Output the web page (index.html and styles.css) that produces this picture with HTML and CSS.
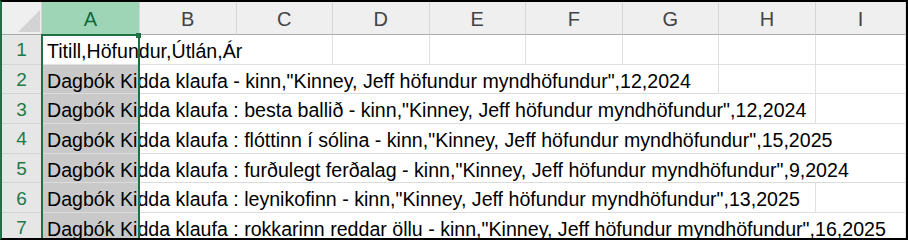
FILE: index.html
```html
<!DOCTYPE html>
<html lang="is">
<head>
<meta charset="utf-8">
<title>Sheet</title>
<link rel="stylesheet" href="styles.css">
</head>
<body>
<div class="sheet">
  <div class="grid">
    <div class="corner"><svg class="tri" width="22" height="22" viewBox="0 0 22 22"><polygon points="22,0 22,22 0,22" fill="#d3d3d3"/></svg></div>
    <div class="ch ch-sel">A</div>
    <div class="ch">B</div>
    <div class="ch">C</div>
    <div class="ch">D</div>
    <div class="ch">E</div>
    <div class="ch">F</div>
    <div class="ch">G</div>
    <div class="ch">H</div>
    <div class="ch">I</div>

    <div class="rh">1</div>
    <div class="txt active s3">Titill,Höfundur,Útlán,Ár</div>
    <div class="cell"></div><div class="cell"></div><div class="cell"></div><div class="cell"></div><div class="cell"></div><div class="cell"></div>

    <div class="rh">2</div>
    <div class="txt sel s7">Dagbók Kidda klaufa - kinn,"Kinney, Jeff höfundur myndhöfundur",12,2024</div>
    <div class="cell"></div><div class="cell"></div>

    <div class="rh">3</div>
    <div class="txt sel s8">Dagbók Kidda klaufa : besta ballið - kinn,"Kinney, Jeff höfundur myndhöfundur",12,2024</div>
    <div class="cell"></div>

    <div class="rh">4</div>
    <div class="txt sel s9">Dagbók Kidda klaufa : flóttinn í sólina - kinn,"Kinney, Jeff höfundur myndhöfundur",15,2025</div>

    <div class="rh">5</div>
    <div class="txt sel s9">Dagbók Kidda klaufa : furðulegt ferðalag - kinn,"Kinney, Jeff höfundur myndhöfundur",9,2024</div>

    <div class="rh">6</div>
    <div class="txt sel s8">Dagbók Kidda klaufa : leynikofinn - kinn,"Kinney, Jeff höfundur myndhöfundur",13,2025</div>
    <div class="cell"></div>

    <div class="rh">7</div>
    <div class="txt sel s9">Dagbók Kidda klaufa : rokkarinn reddar öllu - kinn,"Kinney, Jeff höfundur myndhöfundur",16,2025</div>
  </div>
  <div class="selbox"></div>
  <div class="handle"></div>
</div>
</body>
</html>
```

FILE: styles.css
```css
html, body {
  margin: 0;
  padding: 0;
  background: #fff;
}

.sheet {
  position: relative;
  width: 908px;
  height: 240px;
  box-sizing: border-box;
  border-top: 2px solid #000;
  border-right: 2px solid #000;
  border-bottom: 2px solid #000;
  border-left: 2px solid #1e7145;
  overflow: hidden;
  font-family: "Liberation Sans", Arial, sans-serif;
}

.grid {
  display: grid;
  grid-template-columns: 40px 98px 96.5px 96.5px 96.5px 96.5px 96.5px 96.5px 97px 1fr;
  grid-template-rows: 33px repeat(7, 29.67px);
}

.corner {
  background: #efefef;
  border-bottom: 1px solid #ababab;
  border-right: 1px solid #d6d6d6;
  box-sizing: border-box;
  display: flex;
  align-items: flex-end;
  justify-content: flex-end;
  padding: 0 1px 2px 0;
}

.tri {
  display: block;
}

.ch {
  background: #efefef;
  color: #444;
  font-size: 20px;
  box-sizing: border-box;
  border-bottom: 1px solid #ababab;
  border-right: 1px solid #d6d6d6;
  display: flex;
  align-items: center;
  justify-content: center;
  padding-top: 2px;
}

.ch-sel {
  background: #9fd5b7;
  color: #0f6b3a;
}

.rh {
  background: #e6e6e6;
  color: #1e7a46;
  font-size: 19px;
  box-sizing: border-box;
  border-bottom: 1px solid #d4d4d4;
  border-right: 1px solid #c6c6c6;
  display: flex;
  align-items: center;
  justify-content: center;
  padding-top: 2px;
}

.cell {
  box-sizing: border-box;
  border-bottom: 1px solid #e1e1e1;
  border-right: 1px solid #e1e1e1;
  background: #fff;
}

.txt {
  box-sizing: border-box;
  border-bottom: 1px solid #e1e1e1;
  border-right: 1px solid #e1e1e1;
  font-size: 19.6px;
  color: #000;
  white-space: nowrap;
  padding: 3px 0 0 5px;
  line-height: 26px;
}

.active {
  background: #fff;
}

.sel {
  background: linear-gradient(to right, #c9c9c9 0, #c9c9c9 98px, #fff 98px);
  border-bottom-color: #dcdcdc;
}

.s3 { grid-column: span 3; }
.s7 { grid-column: span 7; }
.s8 { grid-column: span 8; }
.s9 { grid-column: span 9; }

.selbox {
  position: absolute;
  left: 39px;
  top: 32px;
  width: 99px;
  height: 220px;
  box-sizing: border-box;
  border: 2px solid #1e7145;
  pointer-events: none;
}

.handle {
  position: absolute;
  left: 134px;
  top: 31px;
  width: 5px;
  height: 5px;
  background: #1e7145;
}
```
